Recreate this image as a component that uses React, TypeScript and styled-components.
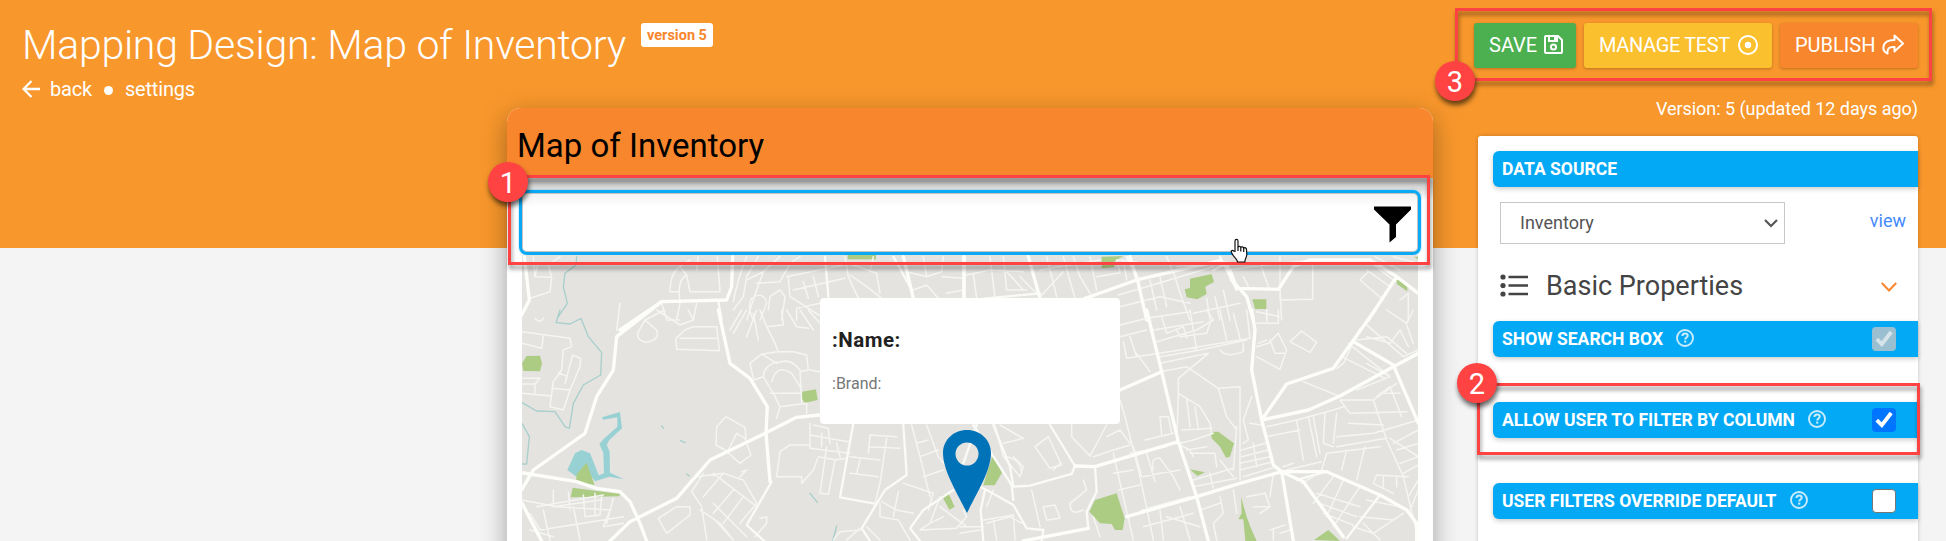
import React from "react";
import styled, { createGlobalStyle } from "styled-components";

const GlobalStyle = createGlobalStyle`
  * { box-sizing: border-box; }
  body { margin: 0; background: #f4f4f4; font-family: Roboto, "Liberation Sans", sans-serif; overflow: hidden; }
`;

const Page = styled.div`
  position: relative;
  width: 1946px;
  height: 541px;
  overflow: hidden;
  background: linear-gradient(#f8972c 248px, #f4f4f4 248px);
  display: grid;
  grid-template-columns: 507px 926px 1fr;
  grid-template-rows: 108px 433px;
`;

const Heading = styled.header`
  grid-column: 1 / 3;
  grid-row: 1;
  padding: 21px 0 0 22px;
  color: #fff;
`;

const TitleRow = styled.div`
  display: flex;
  align-items: flex-start;
  height: 56px;
`;

const Title = styled.h1`
  margin: 0;
  width: 619px;
  font-size: 41px;
  line-height: 48px;
  font-weight: 300;
  letter-spacing: -0.26px;
  white-space: nowrap;
`;

const VersionTag = styled.span`
  margin-top: 2px;
  width: 72px;
  height: 24px;
  line-height: 26px;
  text-align: center;
  border-radius: 3px;
  background: #fff;
  color: #f8862d;
  font-size: 14.5px;
  font-weight: 700;
`;

const Nav = styled.nav`
  display: flex;
  align-items: center;
  height: 24px;
  font-size: 20px;
  line-height: 24px;
  letter-spacing: -0.2px;
`;

const Dot = styled.i`
  width: 9px;
  height: 9px;
  border-radius: 50%;
  background: #fff;
  margin: 2px 12px 0 12px;
`;

const Label = styled.span<{ $w: number; $gap?: number }>`
  width: ${(p) => p.$w}px;
  margin-left: ${(p) => p.$gap ?? 0}px;
  white-space: nowrap;
`;

const Card = styled.main`
  grid-column: 2;
  grid-row: 2;
  height: 480px;
  background: #fff;
  border-radius: 14px 14px 0 0;
  box-shadow: 0 8px 26px rgba(0, 0, 0, 0.34);
  display: flex;
  flex-direction: column;
`;

const CardHeader = styled.div`
  height: 70px;
  padding: 18px 0 0 10px;
  border-radius: 14px 14px 0 0;
  background: #f8862d;
  color: #000;
  font-size: 33px;
  line-height: 40px;
`;

const SearchArea = styled.div`
  height: 77px;
  padding: 12px 12px 0;
  background: linear-gradient(rgba(0, 0, 0, 0.28), rgba(0, 0, 0, 0) 22px);
`;

const SearchBox = styled.div`
  height: 65px;
  border: 3px solid #0ba9f4;
  border-radius: 8px;
  background: linear-gradient(#f1f1f1, #fff 14px);
  box-shadow: inset 0 0 0 1px #c4c4c4, 0 0 2px rgba(11, 169, 244, 0.6);
  display: flex;
  justify-content: flex-end;
  padding: 13px 7px 0 0;
  position: relative;
`;

const MapArea = styled.div`
  position: relative;
  margin: 0 15px;
  height: 290px;
  overflow: hidden;
`;

const MapArt = styled.svg`
  display: block;
  width: 896px;
  height: 290px;
  fill: none;
  stroke-linejoin: round;
  stroke-linecap: round;
`;

const Popup = styled.div`
  position: absolute;
  left: 298px;
  top: 43px;
  width: 300px;
  height: 126px;
  border-radius: 4px;
  background: #fff;
  padding: 30px 0 0 12px;
`;

const PopupName = styled.div`
  color: #212121;
  font-size: 20.5px;
  font-weight: 700;
  line-height: 24px;
  letter-spacing: 0.5px;
`;

const PopupBrand = styled.div`
  margin-top: 21px;
  color: #777;
  font-size: 16px;
  line-height: 22px;
`;

const Pin = styled.svg`
  position: absolute;
  left: 421px;
  top: 174px;
`;

const Side = styled.aside`
  grid-column: 3;
  grid-row: 1 / 3;
  padding: 23px 28px 0 41px;
`;

const Actions = styled.div`
  display: flex;
  gap: 8px;
`;

const Action = styled.button<{ $bg: string; $w: number; $text: number; $tracking?: number }>`
  width: ${(p) => p.$w}px;
  height: 45px;
  padding: 0 0 0 15px;
  border: 0;
  border-radius: 3px;
  background: ${(p) => p.$bg};
  color: #fff;
  font: 400 20px/43px Roboto, sans-serif;
  letter-spacing: ${(p) => p.$tracking ?? 0}px;
  display: flex;
  align-items: center;
  box-shadow: 0 1px 3px rgba(0, 0, 0, 0.25);
  white-space: nowrap;
  span { width: ${(p) => p.$text}px; height: 44px; text-align: left; }
  svg { flex: none; margin-bottom: 2px; }
`;

const VersionInfo = styled.div`
  height: 68px;
  padding-top: 29px;
  text-align: right;
  color: #fff;
  font-size: 18px;
  line-height: 24px;
  letter-spacing: -0.04px;
`;

const Panel = styled.section`
  margin-left: 4px;
  width: 440px;
  height: 420px;
  padding: 15px 0 0 15px;
  background: #fff;
  border-radius: 3px;
  box-shadow: 0 0 4px rgba(0, 0, 0, 0.2);
`;

const Bar = styled.div<{ $after: number }>`
  display: flex;
  align-items: center;
  gap: 13px;
  height: 36px;
  margin-bottom: ${(p) => p.$after}px;
  padding: 0 22px 0 9px;
  border-radius: 6px 0 0 6px;
  background: #04a9f5;
  color: #fff;
  font-size: 17.54px;
  line-height: 36px;
  font-weight: 700;
  box-shadow: 0 2px 5px rgba(0, 0, 0, 0.2);
  white-space: nowrap;
  > svg { margin-bottom: 2px; }
`;

const Check = styled.span<{ $state: "on" | "off" | "disabled" }>`
  margin-left: auto;
  width: 24px;
  height: 24px;
  border-radius: 4px;
  background: ${(p) => ({ on: "#0075ff", off: "#fff", disabled: "#9abfd0" })[p.$state]};
  border: ${(p) => (p.$state === "off" ? "1px solid #767676" : "0")};
  color: ${(p) => (p.$state === "disabled" ? "#d6e4ea" : "#fff")};
  svg { display: block; }
`;

const SourceRow = styled.div`
  display: flex;
  justify-content: space-between;
  padding: 0 12px 0 7px;
  height: 72px;
`;

const Select = styled.div`
  width: 285px;
  height: 42px;
  border: 1px solid #c8c8c8;
  padding: 0 6px 0 19px;
  display: flex;
  align-items: center;
  justify-content: space-between;
  color: #555;
  font-size: 18px;
  line-height: 39px;
  span { height: 40px; }
`;

const ViewLink = styled.a`
  color: #448aff;
  font-size: 18px;
  line-height: 38px;
`;

const Section = styled.div`
  display: flex;
  align-items: flex-start;
  height: 47px;
  padding: 0 21px 0 7px;
  color: #444;
  font-size: 27px;
  line-height: 24px;
  span { margin-left: 18px; flex: 1; }
`;

const Callout = styled.div<{ $x: number; $y: number; $w: number; $h: number }>`
  position: absolute;
  left: ${(p) => p.$x}px;
  top: ${(p) => p.$y}px;
  width: ${(p) => p.$w}px;
  height: ${(p) => p.$h}px;
  border: 3px solid #ff4343;
  filter: drop-shadow(1px 4px 2px rgba(0, 0, 0, 0.42));
  z-index: 3;
`;

const Badge = styled.div<{ $x: number; $y: number }>`
  position: absolute;
  left: ${(p) => p.$x - 20}px;
  top: ${(p) => p.$y - 20}px;
  width: 40px;
  height: 40px;
  border-radius: 50%;
  background: #ff4343;
  color: #fff;
  font: 29px/42px Roboto, sans-serif;
  text-align: center;
  box-shadow: 1px 4px 5px rgba(0, 0, 0, 0.6);
  z-index: 4;
`;

const Pointer = styled.svg`
  position: absolute;
  left: 1229px;
  top: 238px;
  z-index: 5;
`;

const HelpIcon = () => (
  <svg width="18" height="18" viewBox="0 0 18 18" fill="none" stroke="#c9ecfd" strokeWidth="1.9">
    <circle cx="9" cy="9" r="8" />
    <path d="M6.4 7.1c0-1.7 1.1-2.6 2.7-2.6s2.6.9 2.6 2.3c0 1.7-2.5 1.9-2.5 3.8" strokeWidth="2" />
    <path d="M8.1 12.6h2.2" strokeWidth="2" />
  </svg>
);

const Tick = () => (
  <svg width="24" height="24" viewBox="0 0 24 24" fill="none" stroke="currentColor" strokeWidth="3.8">
    <path d="M4.8 12.2l5 5L19.2 5" />
  </svg>
);

type Tile = { x: number; y: number; parks: string; water?: string; stream?: string; minor: string; mid: string; major: string };

const tiles: Tile[] = [
  {
    x: -42,
    y: -165,
    parks: "M1103 490H1188V508H1103Z",
    stream: "M290 500L288 525L255 550L250 590L262 640L235 680",
    minor:
      "M160 500L165 560L215 562L210 605L150 625M165 560L175 515M215 562L205 525L240 500M570 605Q570 550 600 530L620 555Q590 570 600 635M570 605H595M600 530L630 510M620 555L630 605H720L712 500M655 500L650 540M800 500L780 555L765 610L760 635M835 500L800 560L790 620L760 660M900 500L850 545L800 570M850 545L830 600L800 690M830 580L900 575L930 520L960 500M865 660L870 620L900 600L915 620L905 690M920 560L1090 525M925 565L930 620L1040 690M940 600L1095 565M970 575L985 625M1000 560L1015 620M1095 500L1105 560L1135 625M1110 555L1160 590L1205 625M1105 520L1190 550L1200 610M1180 500L1170 545M1280 545L1340 560L1385 545L1390 500M1300 600L1340 585L1375 625M1330 500L1340 560M1385 560L1450 565M1400 610L1450 600M950 690V655L1020 640M420 640L410 720M545 640L560 690L600 690M600 640L590 690M650 640L640 690M820 690Q800 650 815 625Q850 600 860 640L840 690",
    mid: "M1035 500L1045 620M715 635L725 690M1240 500L1290 590",
    major: "M133 500L148 630L125 675M758 500L755 590L740 630L545 635L420 720M1270 500L1300 625M1452 500V625",
  },
  {
    x: 438,
    y: -165,
    parks: "M425 500L490 498L465 512L462 532L425 535ZM690 566L755 552L762 576L736 590L740 612L712 628L680 622L674 598L690 594ZM877 628H919V657H885ZM1312 563L1342 585L1342 604L1310 582ZM1362 500H1375V510Z",
    minor:
      "M20 555L90 540L190 545M40 550L50 625M90 500L105 625M130 500L140 600H200M140 545L190 600M180 560L240 620L310 545M260 500L275 560L290 620M310 500L325 555L345 625M240 540L420 510M340 500L360 560L390 610M390 500L410 600M410 560L480 548L470 510L530 515M490 510L500 570M475 615L560 590L760 530M480 650L600 620L690 640M570 570L590 660M600 560L620 650M640 545L660 610L690 690M620 500L640 550M650 530L800 515M740 625L750 690M765 620L780 690M790 600L810 690M700 670L840 640M800 540L960 520L1060 510M850 560L870 600M900 520L925 590M960 500V630L1058 628V510M960 600L965 690M1220 540L1290 590M1235 520L1300 570M1245 500L1320 540M1225 545L1200 570L1270 630M1320 630L1345 610V690M1300 500L1375 520M920 660V690",
    mid: "M500 500L535 570M0 640L80 625L240 610M760 540L800 520M780 500L830 600",
    major: "M12 500V625M205 500L240 625M375 625L530 570L780 512L810 540L830 595L955 598L1000 530L1050 510H1230L1310 560L1375 610M510 500L535 580L560 690M800 520L815 570L860 620L880 690M1310 560L1225 690",
  },
  {
    x: -42,
    y: 55,
    parks: "M126 160L140 138L180 137L186 160L180 184L130 183ZM966 245L1008 238L1013 270L975 279L966 268ZM290 492L320 458L344 525L288 516ZM278 533L420 552L418 559L272 562ZM1386 558L1405 549L1424 590L1408 599Z",
    water: "M262 480L285 430L305 420L330 430L350 480L356 496L372 490L370 428L358 402L372 386L412 350V322L370 329L366 322L420 306L426 355L388 390L380 404L389 425L390 488L432 508L388 500L345 514L320 480L290 500Z",
    stream: "M240 0L228 38L270 42L303 25L325 80L365 128L362 195L310 225L280 280L268 355L255 350L225 305L170 303L126 278M126 340L148 380L140 462H126M990 550L1012 577M1070 648L1058 693M545 348L550 354M602 392L615 398M620 492L628 498",
    minor:
      "M126 65L270 85L275 110L250 120L245 180L220 215L210 290L250 300L270 240L300 170L302 145L278 135L255 220M235 188L262 200M215 235L270 240M190 78L185 115L126 100M126 250L215 258M126 222H165V250M165 222L180 205H126M165 25Q180 42 190 25M475 65Q465 90 500 97Q540 90 530 60L495 30L475 65M495 30L555 0M530 0L600 45L640 30L625 0M640 50H710L718 122L590 118L588 85L615 60ZM600 85H710M785 0L750 60M800 0L760 70M830 0L800 80M820 10L835 90M840 0L860 50L910 45L905 0M860 50L885 100L895 125L940 125L980 135L985 180L960 185L965 275M810 160L845 132L890 160Q930 140 960 180M810 160L820 205M845 132L895 125M820 210L850 200Q850 170 890 155M850 200L880 250L900 290L980 280L980 310M870 250H965M875 215Q890 160 935 190L960 230M900 290L890 325M990 180L1020 185M920 0L950 50L985 55M960 0L1000 60M985 0L1020 40M708 405L710 350L738 320L795 352L798 385M708 405L735 420L780 460L813 435L795 385L770 370L745 420M890 500L965 500V520L1000 480L1015 440L1070 450M890 500L900 425L930 405H990M990 340V415L1110 430M1000 345L1045 355L1050 400M990 375L1105 395M1025 370V410M1040 410L1020 550L1045 553L1065 450L1100 445M1070 400L1080 440M1110 440L1200 450M1110 490L1195 500M1140 450L1130 490M1165 430L1170 375L1250 380M1165 410L1260 415M1220 385L1200 520L1180 600M1295 345L1320 440L1350 560M1340 345L1375 440L1440 520M1310 400L1345 390M1320 440L1375 420M1330 500L1390 480M1270 520L1360 550L1345 600M1255 545L1240 620M1205 575L1250 600L1300 610M1200 580V620L1255 630L1290 690M650 500L730 490L790 510L830 580M700 490L830 590M730 490L670 560M760 540L700 610M790 560L730 640M830 580L780 640M780 500L800 480L785 485M670 490L635 545L665 590L680 690M660 600L720 640L760 690M700 580L800 680M700 625L760 690M840 625L860 620V640L825 680M535 625L590 590L630 590V615L560 670ZM220 540V590L360 570M265 545L270 600M310 555L315 620L360 615L365 560M345 550V620M170 590L370 555M126 570L230 590L390 600L370 650L430 640M150 610L180 660L430 620M150 660L220 680M190 600L210 690M280 590L300 690M400 565L380 640M1390 620L1350 640L1320 660L1430 655L1460 620L1450 600M1350 640L1380 560M1380 590L1460 650M1080 665L1140 660M1080 665L1060 690M1140 655L1100 690M1160 650L1200 690",
    mid: "M1270 345L1280 495L1215 540L1145 655L1170 693M1120 340L1080 562L1180 580M875 515L800 645L860 700M1420 540L1330 600L1290 655L1320 693M1490 345L1450 460",
    major: "M545 -25L410 80L400 180L350 260L315 370L160 480L125 540M125 488L290 515L350 535L420 545L450 575L480 640L500 693M715 0L750 160L810 205L862 290L858 370L870 515M390 693L450 635L590 565L690 450L855 370L950 322L1020 315M126 580L185 693",
  },
  {
    x: 438,
    y: 55,
    parks: "M100 430L126 488L104 526H70L90 460ZM388 605L405 570L470 550L494 625L488 660H465L455 642L420 640ZM753 365H775L822 400L810 440L798 443L780 410L755 385ZM690 478L735 487L712 498ZM843 560L860 620L875 660L890 693H856L850 628H835L845 610ZM1062 690L1105 660L1140 693Z",
    minor:
      "M480 80L560 60M490 95L500 145L660 120L870 85M480 45L560 25L690 5M580 60L730 35M510 80L530 140M590 95L710 60L760 30L740 0M600 140L720 120L860 90M600 160L745 130L655 205V260L650 400M605 20L620 70L670 50L680 85M690 0L710 120M650 60L660 80L740 70L750 40M780 0L800 90M820 10L840 85M860 0L870 85M780 120Q800 145 850 125V100M530 130L570 185M600 185L680 170L775 235L840 230V400L840 510M775 235L800 320L830 360M655 250L720 290L750 340L755 370M680 265L690 350M705 290L715 360M665 360L755 355M890 110L925 100L955 70L980 120L960 178L890 140M895 100L920 90M930 90L945 130L975 130M990 95L1025 63L1070 97L1050 127ZM890 40H955V0M920 0V40M890 5L960 20M875 260L850 330L865 390L850 400M870 340L905 345M480 270L495 320L515 400L540 500L580 690M335 345V380L390 438L440 345M440 380L480 360L510 400M400 440L460 420L510 405M555 390L640 370M600 320H625L635 370M600 320L605 375M225 410L265 380L305 465L270 475ZM105 345L130 440L180 500L190 470L160 440M120 345L190 385L130 400M130 440Q180 440 185 490M460 430L485 540L520 690M460 490L520 480M475 540L540 525M520 410L545 500M585 515L560 430M580 480Q570 440 600 445L640 500L660 540M510 430L620 410M550 500L600 490L660 480M545 600L690 560M550 650L700 610M600 600L610 690M660 590L690 690M620 620L720 650M660 400L700 390L760 370M680 420L740 410M690 430L765 430L770 470M700 510L820 475M700 530L830 505M750 490L760 535M780 450L820 500M845 420L915 400M845 440L925 420M840 460L930 440M840 480L940 455M850 500L950 470M830 350L820 480M880 400L890 470M920 350L1010 330L1030 450M920 380L1020 360M1010 330L1120 300L1150 290M1045 320L1070 440M1060 320L1080 430M1095 310L1090 400L1120 410M1130 310L1120 400M1140 270L1170 310L1340 305M1165 340L1270 345M1130 380L1240 370L1375 330M1130 410L1280 385M1100 430L1260 410M1100 430L1085 480M1160 420L1145 480M1215 410L1190 510M1240 270L1280 390L1330 500L1375 690M1140 270H1240L1310 220M1030 215L1140 260M1190 240L1290 200L1220 160M1200 55L1150 160L1130 175M1165 100L1290 200M1145 140L1275 205M1215 40L1330 140L1375 120M1190 90L1280 80L1340 130M1220 80L1290 100L1320 60L1345 110M1280 0L1340 40L1360 0M1340 45L1360 100M1260 250L1320 250M1250 260L1290 230L1325 320M1300 400L1375 360M1290 385L1375 440M1310 420L1375 400M1320 460L1375 440M1330 490L1375 465M1345 560L1375 510M1350 600L1375 540M1240 520L1250 495L1345 500M1240 520L1300 550M1270 500V530M1310 500V530M980 480L1085 455M970 470L1000 460M1025 520L1060 500M1070 550L1200 590M1080 580L1190 620M1090 610L1180 645M1120 500L1060 580M1150 510L1100 620M1200 530L1120 650M1220 570L1320 590M1200 620L1300 630M1180 650L1240 670L1330 610M1210 640L1250 680M1230 660L1260 690M860 560L915 550L930 590L900 610M880 590L930 590M930 660L975 645M940 690V660M960 670L990 660M780 560L790 610L760 640L770 690M820 540L830 610M720 600L780 580M215 540L240 650M250 590L285 585L300 625L260 630ZM330 580L380 540L370 510M330 580Q330 620 370 600M80 640L150 620L185 640M70 630L160 615L165 690M100 630L110 690M0 650H70M0 670L60 660M400 620L420 680M280 480L300 460M100 540L80 590M940 490L930 560M650 400L690 420L700 440",
    mid: "M75 540L62 600L70 693M0 500L80 540L160 585L200 655L250 660L245 693M40 345L155 525L160 570M100 345L150 470L160 530L210 527L335 492L345 468L270 345M1100 485L1010 510M405 470L410 545L380 605L385 655M1260 555L1160 685",
    major: "M560 0L605 185L655 395L710 560L745 693M480 240L605 185M345 468L405 470L655 395M500 620L710 560L840 520L965 485L1030 515L1150 680M875 0L885 60L875 180L905 330L940 465L965 485L1000 693M905 330L980 222L1120 175L1245 0M905 330L1045 300L1140 258L1300 170L1375 130M1180 95L1300 165L1375 340M965 485L1100 485L1260 555L1340 600L1370 640V693M190 693L385 655",
  },
];

const CityMap = () => (
  <MapArt viewBox="0 0 896 290">
    <rect width="896" height="290" fill="#e4e3e0" />
    {tiles.map((t, i) => (
      <g key={i} transform={`translate(${t.x} ${t.y}) scale(.33333)`}>
        {t.water && <path d={t.water} fill="#97d1d4" />}
        {t.stream && <path d={t.stream} stroke="#a8cfcb" strokeWidth="4" />}
        <path d={t.parks} fill="#adcc83" />
        <path d={t.minor} stroke="#f5f5f2" strokeWidth="4.500" />
        <path d={t.mid} stroke="#fafaf7" strokeWidth="7" />
        <path d={t.major} stroke="#fdfdfa" strokeWidth="10" />
      </g>
    ))}
  </MapArt>
);

export default function App() {
  return (
    <>
      <GlobalStyle />
      <Page>
        <Heading>
          <TitleRow>
            <Title>Mapping Design: Map of Inventory</Title>
            <VersionTag>version 5</VersionTag>
          </TitleRow>
          <Nav>
            <svg width="18" height="18" viewBox="0 0 18 18" fill="none" stroke="#fff" strokeWidth="2.300">
              <path d="M9.500 1L1.600 9l7.900 8M2 9h16" />
            </svg>
            <Label $w={42} $gap={10}>back</Label>
            <Dot />
            <Label $w={70}>settings</Label>
          </Nav>
        </Heading>

        <Card>
          <CardHeader>Map of Inventory</CardHeader>
          <SearchArea>
            <SearchBox>
              <svg width="37" height="37" viewBox="0 0 37 37">
                <path d="M0 0.500h37v3L22 18.500V31l-6.500 5.500V18.500L0 3.500z" fill="#000" />
              </svg>
            </SearchBox>
          </SearchArea>
          <MapArea>
            <CityMap />
            <Popup>
              <PopupName>:Name:</PopupName>
              <PopupBrand>:Brand:</PopupBrand>
            </Popup>
            <Pin width="48" height="85" viewBox="0 0 48 85">
              <path
                fillRule="evenodd"
                fill="#0072b8"
                d="M24 1C10.500 1 0 11 0 24c0 17 13 38 24 60 11-22 24-43 24-60C48 11 37.500 1 24 1zm0 12.500a11.500 11.500 0 1 1 0 23 11.500 11.500 0 0 1 0-23z"
              />
            </Pin>
          </MapArea>
        </Card>

        <Side>
          <Actions>
            <Action $bg="#4caf50" $w={102} $text={55}>
              <span>SAVE</span>
              <svg width="19" height="19" viewBox="0 0 19 19" fill="none" stroke="#fff" strokeWidth="2">
                <path d="M1 2q0-1 1-1h12l4 4v12q0 1-1 1H2q-1 0-1-1zM5 1v5h8V1" />
                <circle cx="9.500" cy="12" r="2.600" />
                <path d="M11 1v4" />
              </svg>
            </Action>
            <Action $bg="#fbc02d" $w={188} $text={139} $tracking={-0.35}>
              <span>MANAGE TEST</span>
              <svg width="20" height="20" viewBox="0 0 20 20" fill="none" stroke="#fff" strokeWidth="2">
                <circle cx="10" cy="10" r="9" />
                <circle cx="10" cy="10" r="3.200" fill="#fff" stroke="none" />
              </svg>
            </Action>
            <Action $bg="#f8862d" $w={138} $text={85}>
              <span>PUBLISH</span>
              <svg width="25" height="21" viewBox="0 0 25 21" fill="none" stroke="#fff" strokeWidth="2" strokeLinejoin="round">
                <path d="M14.500 1.500L23 9.500l-8.500 8V13C9 12.500 7 14.500 7.500 19.500 1.500 18 .500 6 14.500 6z" />
              </svg>
            </Action>
          </Actions>
          <VersionInfo>Version: 5 (updated 12 days ago)</VersionInfo>
          <Panel>
            <Bar $after={15}>DATA SOURCE</Bar>
            <SourceRow>
              <Select>
                <span>Inventory</span>
                <svg width="14" height="9" viewBox="0 0 14 9" fill="none" stroke="#555" strokeWidth="2.200">
                  <path d="M1 1l6 6 6-6" />
                </svg>
              </Select>
              <ViewLink>view</ViewLink>
            </SourceRow>
            <Section>
              <svg width="28" height="23" viewBox="0 0 28 23" fill="#444" stroke="#444" strokeWidth="2.400">
                <g stroke="none">
                  <circle cx="3" cy="3" r="2.600" />
                  <circle cx="3" cy="11.500" r="2.600" />
                  <circle cx="3" cy="20" r="2.600" />
                </g>
                <path d="M8.500 3H28M8.500 11.500H28M8.500 20H28" />
              </svg>
              <span>Basic Properties</span>
              <svg width="16" height="24" viewBox="0 0 16 24" fill="none" stroke="#f8862d" strokeWidth="2">
                <path d="M.8 9l7.200 7.500L15.200 9" />
              </svg>
            </Section>
            <Bar $after={45}>
              SHOW SEARCH BOX <HelpIcon />
              <Check $state="disabled"><Tick /></Check>
            </Bar>
            <Bar $after={45}>
              ALLOW USER TO FILTER BY COLUMN <HelpIcon />
              <Check $state="on"><Tick /></Check>
            </Bar>
            <Bar $after={0}>
              USER FILTERS OVERRIDE DEFAULT <HelpIcon />
              <Check $state="off" />
            </Bar>
          </Panel>
        </Side>

        <Callout $x={508} $y={175} $w={922} $h={90} />
        <Badge $x={508} $y={182}>1</Badge>
        <Callout $x={1477} $y={383} $w={443} $h={72} />
        <Badge $x={1477} $y={383}>2</Badge>
        <Callout $x={1455} $y={8} $w={477} $h={73} />
        <Badge $x={1455} $y={81}>3</Badge>

        <Pointer width="20" height="26" viewBox="0 0 20 26" fill="#fff" stroke="#111" strokeWidth="1.200" strokeLinejoin="round">
          <path d="M6 13.500V3.200C6 .8 9 .8 9 3.200V9c.5-1 2.500-1 2.800.5.700-1 2.500-.8 2.900.6 1-.9 2.800-.3 2.800 1.400L17.800 16c0 4-2 5-2 8H8.500c0-3-4-4.500-6-9.500-.8-2 1.300-2.500 2.200-1.500z" />
          <path d="M9 9v4M11.800 9.500v4M14.700 10v4" fill="none" />
        </Pointer>
      </Page>
    </>
  );
}
